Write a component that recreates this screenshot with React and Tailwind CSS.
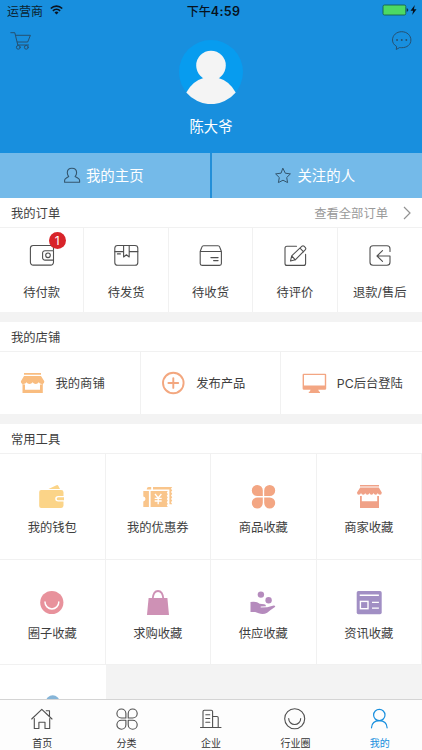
import React from "react";

function Line({ size = 28, color = "#505050", w = 1.1, className = "", children }) {
  return (
    <svg width={size} height={size} viewBox={`0 0 ${size} ${size}`} fill="none" stroke={color} strokeWidth={w} strokeLinecap="round" strokeLinejoin="round" className={`block shrink-0 ${className}`}>
      {children}
    </svg>
  );
}

function Solid({ width = 28, color, className = "", children }) {
  return (
    <svg width={width} height="28" viewBox={`0 0 ${width} 28`} fill={color} className={`block shrink-0 ${className}`}>
      {children}
    </svg>
  );
}

const orders = [
  {
    label: "待付款",
    badge: "1",
    icon: (
      <Line>
        <path d="M25.5 8.2V6.3a2.8 2.8 0 0 0-2.8-2.8H5.2a2.8 2.8 0 0 0-2.8 2.8v14a2.8 2.8 0 0 0 2.8 2.8h17.5a2.8 2.8 0 0 0 2.8-2.8V18" />
        <path d="M25.5 8.7H17a2.4 2.4 0 0 0-2.4 2.4v4.6a2.4 2.4 0 0 0 2.4 2.4h8.5z" />
        <circle cx="20" cy="13.3" r="2.3" />
      </Line>
    ),
  },
  {
    label: "待发货",
    icon: (
      <Line>
        <rect x="2.8" y="3.5" width="23" height="19.8" rx="2.8" />
        <path d="M2.8 9.6h8.8M17.2 9.6h8.6M11.6 3.5V15l2.8-2.2 2.8 2.2V3.5M5.4 11.9h3" />
      </Line>
    ),
  },
  {
    label: "待收货",
    icon: (
      <Line>
        <path d="M4.2 9.5 5.8 5.2q.5-1.5 1.8-1.500H22q1.300 0 1.800 1.500l1.600 4.300v12q0 1.900-1.900 1.900H6.100q-1.900 0-1.900-1.900zM4.200 9.500h21.200M14.900 15.600h7.200M17.600 18.600h4.500" />
      </Line>
    ),
  },
  {
    label: "待评价",
    icon: (
      <Line>
        <path d="M15.500 4.200H6a2 2 0 0 0-2 2v15.200a2 2 0 0 0 2 2h16.600a2 2 0 0 0 2-2v-9" />
        <path d="m9.500 19 1.200-5.200L21 4.200q1-.8 2 0l1.400 1.400q.8 1 0 2L14.300 17.800zM10.700 13.800l3.600 4M19 6.200l3.600 3.600" />
      </Line>
    ),
  },
  {
    label: "退款/售后",
    icon: (
      <Line>
        <path d="M24 9.500V6.700a3 3 0 0 0-3-3H7a3 3 0 0 0-3 3v13.600a3 3 0 0 0 3 3h14a3 3 0 0 0 3-3V14H11M16.500 8.700 11 14l5.500 5.300" />
      </Line>
    ),
  },
];

const tools = [
  {
    label: "我的钱包",
    icon: (
      <Solid color="#fbd488">
        <path d="m10.500 6 8-3.800q1.300-.5 1.900.8L22 6z" />
        <path fillRule="evenodd" d="M3.200 7h20q2.300 0 2.300 2.300V13h-5.300q-3 0-3 2.700t3 2.700h5.300v4.200q0 2.400-2.300 2.400h-20q-2 0-2-2V9q0-2 2-2z" />
        <path d="M20.200 14.200h5.800v3h-5.800a1.500 1.500 0 0 1 0-3z" />
      </Solid>
    ),
  },
  {
    label: "我的优惠券",
    icon: (
      <Solid width={32} color="#f9c58b">
        <path d="M4.800 6q0-2 2-2h2.400v2.500H4.800zM11 4h19.200l-1.200 1.700 1.200 1.700-1.200 1.700 1.200 1.700-1.200 1.700 1.200 1.700-1.200 1.700 1.200 1.700-1.200 1.700 1.200 2h-2.800V6.500H11z" />
        <path d="M1.300 8h5.600v16H1.300v-5.600q2.200-.4 2.200-2.400T1.300 13.600zM8.600 8h17.200l-1 1.600 1 1.600-1 1.600 1 1.600-1 1.600 1 1.600-1 1.600 1 1.600-1 1.600 1 1.600H8.600z" />
        <path d="m13 11 3.200 4 3.200-4M16.200 15v6.300M12.700 15.300h7M12.700 18h7" fill="none" stroke="#fff" strokeWidth="1.300" />
      </Solid>
    ),
  },
  {
    label: "商品收藏",
    icon: (
      <Solid color="#f3a683" className="translate-x-[0.500px]">
        <path d="M13.300 13H7.800a5.500 5.500 0 1 1 5.500-5.500zM14.700 13V7.500a5.500 5.500 0 1 1 5.500 5.500zM13.300 14.500V20a5.500 5.500 0 1 1-5.500-5.500zM14.700 14.500h5.500a5.500 5.500 0 1 1-5.500 5.500z" />
      </Solid>
    ),
  },
  {
    label: "商家收藏",
    icon: (
      <Solid color="#f0a187">
        <path d="M5 2h19v1.500H5zM5.200 4.600h18.600l3 5q0 2.200-1.800 2.200t-2.200-1.800q-.4 1.800-2.100 1.800T18.500 10q-.3 1.800-2 1.800T14.400 10q-.3 1.800-2.100 1.800T10.200 10q-.3 1.800-2 1.800T6 10q-.4 1.800-2.200 1.800T2 9.600z" />
        <path d="M5 13h1.800v5.300h15.400V13H24v12H5z" />
      </Solid>
    ),
  },
  {
    label: "圈子收藏",
    icon: (
      <Solid color="#e8929c">
        <circle cx="13.800" cy="13.500" r="11.600" />
        <path d="M7 13a6.900 6.900 0 0 0 13.800 0" fill="none" stroke="#fff" strokeWidth="1.500" strokeLinecap="round" />
      </Solid>
    ),
  },
  {
    label: "求购收藏",
    icon: (
      <Solid color="#ce91b5">
        <path d="M4.600 9h18.800L25 25.900H3z" />
        <path d="M8.600 10.200Q9.300 2 14 2t5.400 8.200" fill="none" stroke="#ce91b5" strokeWidth="1.800" />
      </Solid>
    ),
  },
  {
    label: "供应收藏",
    icon: (
      <Solid color="#b58bbd">
        <circle cx="11.900" cy="5.600" r="3.200" />
        <circle cx="19.600" cy="11.200" r="3.200" />
        <path d="M1.500 12.900q5.700-1 9.200 1.800l4.500.6q2 .4 1.700 2l-5.200.3v.8l6.500-.1 5.600-1.600q2.300-.4 2.500 1-4.600 3-8.100 6-4 2.400-8.500.6l-3.500-1.200H1.500z" />
      </Solid>
    ),
  },
  {
    label: "资讯收藏",
    icon: (
      <Solid color="#a18fc4">
        <rect x="1.700" y="2" width="25" height="23.300" rx="1.700" />
        <g fill="none" stroke="#fff" strokeWidth="1.400">
          <path d="M4.700 6.200h19.200M17 13.400h6.900M17 19.100h6.900" />
          <rect x="5.400" y="12.400" width="7.600" height="7.300" />
        </g>
      </Solid>
    ),
  },
];

const shop = [
  {
    label: "我的商铺",
    icon: (
      <Solid color="#f9bd80" className="-translate-x-[0.500px]">
        <path d="M5.500 4h17v1.800h-17zM5.500 7h17l3.300 5.200q0 2.800-2.600 2.800-2 0-3-1.700-1 1.700-3 1.700t-3.100-1.700Q13 15 11 15t-3-1.700Q7 15 5 15q-2.600 0-2.600-2.800z" />
        <path d="M4.700 15.500h1.800v5.300h15v-5.300h1.800V15h1v9H4v-9h1z" />
      </Solid>
    ),
  },
  {
    label: "发布产品",
    icon: (
      <Solid color="#f3a77f">
        <g fill="none" stroke="#f3a77f" strokeWidth="1.900" strokeLinecap="round">
          <circle cx="14.300" cy="14" r="10.300" />
          <path d="M9.400 14h9.800M14.300 9.100v9.800" />
        </g>
      </Solid>
    ),
  },
  {
    label: "PC后台登陆",
    icon: (
      <Solid color="#f3a683">
        <path fillRule="evenodd" d="M3.600 4.700h21.600q1 0 1 1v13.700q0 1.300-1.300 1.300h-6.700l1 2h.8v1.200H8.800v-1.200h.8l1-2H3.900q-1.300 0-1.300-1.300V5.700q0-1 1-1zM4 6v10.500h20.800V6z" />
      </Solid>
    ),
  },
];

const tabs = [
  {
    label: "首页",
    icon: (
      <Line size={24}>
        <path d="m1.700 12 10.100-9.700L22 12M4.300 11.500v10h4.600v-6.200H15v6.200h4.700v-10M16.200 3.700h3.300v5" />
      </Line>
    ),
  },
  {
    label: "分类",
    icon: (
      <Line size={24}>
        <path d="M10.900 11H6.400a4.500 4.500 0 1 1 4.500-4.500zM13.200 11V6.500a4.500 4.500 0 1 1 4.500 4.500zM10.900 13.200v4.500a4.500 4.500 0 1 1-4.500-4.500zM13.200 13.200h4.500a4.500 4.500 0 1 1-4.500 4.500z" />
      </Line>
    ),
  },
  {
    label: "企业",
    icon: (
      <Line size={24}>
        <path d="M1.500 20.500H22M4 20.500v-16q0-1.300 1.300-1.300h7q1.300 0 1.300 1.300v16M13.600 9.500H18q1.200 0 1.200 1.200v9.800M6.800 7.700h4M6.800 11.500h4M6.800 15.200h4" />
      </Line>
    ),
  },
  {
    label: "行业圈",
    icon: (
      <Line size={24}>
        <circle cx="11.700" cy="11.700" r="10" />
        <path d="M5.700 11.500a6 6 0 0 0 12 0" />
      </Line>
    ),
  },
  {
    label: "我的",
    active: true,
    icon: (
      <Line size={24} color="#188fde" w={1.2}>
        <circle cx="11.300" cy="8" r="5.700" />
        <path d="M3.500 20.800c.3-4.300 3-7.100 7.800-7.100s7.500 2.800 7.800 7.100" />
      </Line>
    ),
  },
];

function SectionTitle({ title, children }) {
  return (
    <div className="flex h-[30px] shrink-0 items-center justify-between border-b border-[#f1f1f1] bg-white pt-0.5 pr-[11px] pl-[11px]">
      <h2>{title}</h2>
      {children}
    </div>
  );
}

function StatusBar() {
  return (
    <div className="grid h-5 grid-cols-3 items-center px-[7px] pt-0.5 text-[12px] leading-5 text-[#0b1e2e]">
      <div className="flex items-center gap-[7px]">
        <span>运营商</span>
        <svg width="13" height="10" viewBox="0 0 13 10" fill="none" stroke="#0b1420" strokeWidth="1.700" className="-mt-1 block">
          <path d="M.8 3.500a8.200 8.200 0 0 1 11.400 0M2.900 5.900a5.200 5.200 0 0 1 7.200 0" />
          <path d="M6.500 9.500 4.500 7.500a3 3 0 0 1 4 0z" fill="#0b1420" stroke="none" />
        </svg>
      </div>
      <div className="flex justify-center pl-[5px] text-[#07121c]">
        <span className="font-medium">下午</span>
        <span className="text-[12.500px] font-semibold tracking-[0.300px]">4:59</span>
      </div>
      <div className="-mr-[3px] flex items-center justify-end">
        <svg width="36" height="12" viewBox="0 0 36 12" className="-mt-1 block">
          <rect x="1" y="1" width="22.800" height="10" rx="1.500" fill="#4cd964" stroke="#17604f" strokeWidth=".9" />
          <path d="M24.700 4.200q1.600.3 1.600 1.800t-1.600 1.800z" fill="#10324a" />
          <path d="M32.800 1 28.500 6.700h2.600L30.200 11l4.300-5.700h-2.600z" fill="#07121c" />
        </svg>
      </div>
    </div>
  );
}

function Header() {
  return (
    <header className="h-[153px] shrink-0 bg-[#188fde]">
      <StatusBar />
      <div className="flex items-start justify-between px-[9px]">
        <Line size={24} color="#265070" w={1} className="mt-[9px]">
          <path d="M1.800 3.700h4l3 12.300h10.700M6.700 6.300h14.700L18.700 13H8.300" />
          <circle cx="9.300" cy="18.300" r="1.900" />
          <circle cx="17.300" cy="18.300" r="1.900" />
        </Line>
        <div className="mt-5 flex flex-col items-center">
          <svg width="64" height="64" viewBox="0 0 64 64" className="block">
            <circle cx="32" cy="32" r="32" fill="#079cef" />
            <g fill="#f4f4f4">
              <circle cx="32" cy="25.500" r="14.800" />
              <path d="M7.300 52.500Q13.500 41 24.500 38l7.500-1 7.500 1Q50.500 41 56.700 52.500A32 32 0 0 1 7.300 52.500z" />
            </g>
          </svg>
          <span className="mt-[13px] text-[14.300px] leading-5 text-white">陈大爷</span>
        </div>
        <Line size={24} color="#265070" w={1} className="mt-[9px]">
          <path d="M7.300 17.300C4.900 15.800 3.500 13.700 3.500 11c0-4.700 4-8.300 9.200-8.300S21.900 6.300 21.900 11s-4 7.700-9.200 7.700q-1 0-2-.2l-3.100 1.800z" />
          <path d="M8 11h.1M12.700 11h.1M17.300 11h.1" strokeWidth="1.800" />
        </Line>
      </div>
    </header>
  );
}

export default function App() {
  return (
    <div className="flex h-[750px] w-[422px] flex-col overflow-hidden bg-[#f3f3f3] text-[12.300px] leading-[18px] text-[#3e3e3e] [font-family:Inter,'Noto_Sans_CJK_SC',sans-serif]">
      <Header />
      <main className="flex min-h-0 flex-1 flex-col overflow-hidden">
        <div className="flex h-[45px] shrink-0 gap-0.5 bg-[#238fd8] text-[14.400px] text-white">
          <div className="flex flex-1 items-center justify-center gap-1 bg-[#74bae9] pr-1">
            <Line size={20} color="#34566e">
              <path d="M6.700 10.500C5.800 9.300 5.300 8 5.300 6.700c0-2.600 1.900-4.400 4.600-4.400s4.700 1.800 4.700 4.400c0 1.300-.5 2.600-1.500 3.800l3 1.700q1.500.8 1.500 2.400v1.700H2.600v-1.700q0-1.600 1.400-2.400z" />
            </Line>
            <span>我的主页</span>
          </div>
          <div className="flex flex-1 items-center justify-center gap-1 bg-[#74bae9] pr-[5px]">
            <Line size={20} color="#34566e" w={1}>
              <path d="m10 2.500 2.300 4.700 5.100.7-3.700 3.600.9 5.100-4.600-2.400-4.600 2.400.9-5.100-3.700-3.600 5.100-.7z" />
            </Line>
            <span>关注的人</span>
          </div>
        </div>

        <SectionTitle title="我的订单">
          <div className="flex items-center gap-[15px] text-[#999]">
            <span>查看全部订单</span>
            <svg width="8" height="14" viewBox="0 0 8 14" fill="none" stroke="#929292" strokeWidth="1.200" className="-mt-0.5 block">
              <path d="m1 1 6 6-6 6" />
            </svg>
          </div>
        </SectionTitle>
        <div className="grid h-[84px] shrink-0 grid-cols-5 divide-x divide-[#f1f1f1] bg-white">
          {orders.map((o) => (
            <div key={o.label} className="flex flex-col items-center pt-3.5">
              <div className="relative">
                {o.icon}
                {o.badge && (
                  <span className="absolute -top-[10px] left-[21px] flex size-[17px] items-center justify-center rounded-full bg-[#d8242a] text-[12px] leading-none text-white">{o.badge}</span>
                )}
              </div>
              <span className="mt-3.5">{o.label}</span>
            </div>
          ))}
        </div>

        <div className="h-2.5 shrink-0" />
        <SectionTitle title="我的店铺" />
        <div className="grid h-[62px] shrink-0 grid-cols-3 divide-x divide-[#f1f1f1] bg-white">
          {shop.map((s) => (
            <div key={s.label} className="flex items-center gap-[9px] pl-[18.500px]">
              {s.icon}
              <span className="pt-0.5">{s.label}</span>
            </div>
          ))}
        </div>

        <div className="h-2.5 shrink-0" />
        <SectionTitle title="常用工具" />
        <div className="grid shrink-0 auto-rows-[105.500px] grid-cols-4">
          {tools.map((t) => (
            <div key={t.label} className="flex flex-col items-center border-r border-b border-[#f1f1f1] bg-white pt-[29px]">
              {t.icon}
              <span className="mt-2">{t.label}</span>
            </div>
          ))}
          <div className="flex flex-col items-center bg-white pt-[29px]">
            <Solid color="#86b5d8">
              <circle cx="13.700" cy="8" r="6.800" />
              <path d="M3 27q0-11 11-11t11 11z" />
            </Solid>
          </div>
        </div>
      </main>

      <nav className="grid h-[51px] shrink-0 grid-cols-5 border-t border-[#d4d4d4] bg-[#fdfdfd] text-[10px] leading-[14px]">
        {tabs.map((t) => (
          <div key={t.label} className={`flex flex-col items-center pt-[7px] ${t.active ? "text-[#188fde]" : "text-[#333]"}`}>
            {t.icon}
            <span className="mt-[5px]">{t.label}</span>
          </div>
        ))}
      </nav>
    </div>
  );
}
